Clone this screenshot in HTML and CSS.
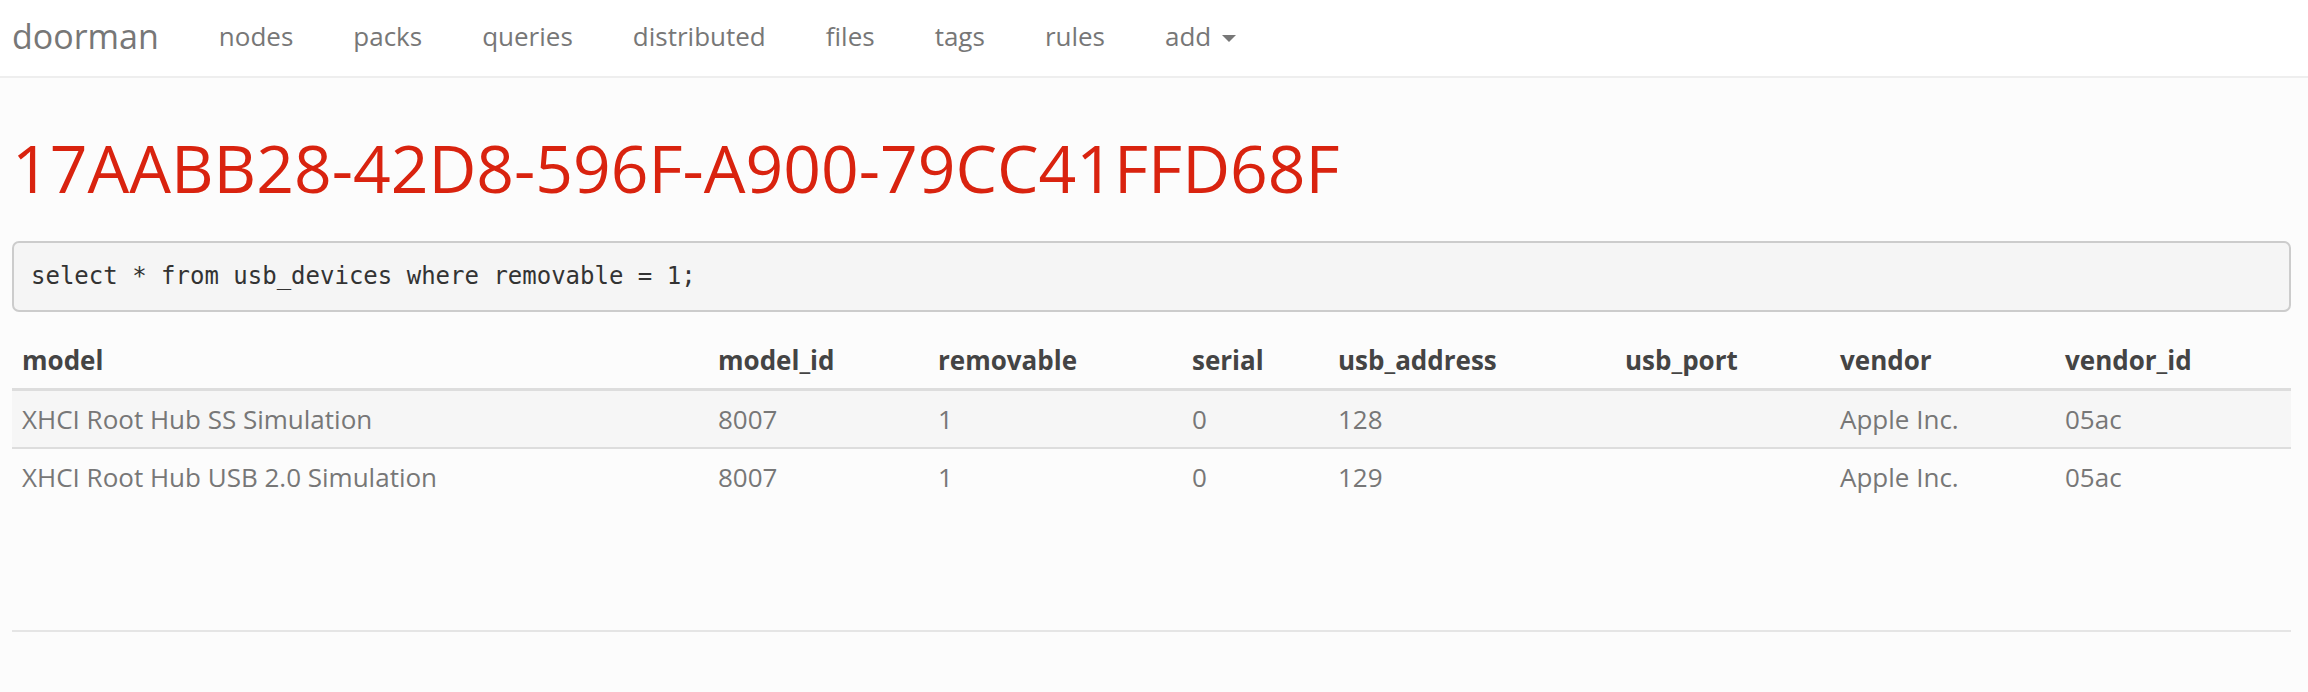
FILE: index.html
```html
<!DOCTYPE html>
<html>
<head>
<meta charset="utf-8">
<title>doorman</title>
<link rel="stylesheet" href="styles.css">
</head>
<body>
<nav class="navbar">
  <a class="brand" href="#">doorman</a>
  <ul class="nav">
    <li><a href="#">nodes</a></li>
    <li><a href="#">packs</a></li>
    <li><a href="#">queries</a></li>
    <li><a href="#">distributed</a></li>
    <li><a href="#">files</a></li>
    <li><a href="#">tags</a></li>
    <li><a href="#">rules</a></li>
    <li><a href="#">add <span class="caret"></span></a></li>
  </ul>
</nav>
<main class="container">
  <h1 class="title">17AABB28-42D8-596F-A900-79CC41FFD68F</h1>
  <pre class="query">select * from usb_devices where removable = 1;</pre>
  <table class="results">
    <colgroup>
      <col class="c-model"><col class="c-model-id"><col class="c-removable"><col class="c-serial"><col class="c-address"><col class="c-port"><col class="c-vendor"><col class="c-vendor-id">
    </colgroup>
    <thead>
      <tr><th>model</th><th>model_id</th><th>removable</th><th>serial</th><th>usb_address</th><th>usb_port</th><th>vendor</th><th>vendor_id</th></tr>
    </thead>
    <tbody>
      <tr><td>XHCI Root Hub SS Simulation</td><td>8007</td><td>1</td><td>0</td><td>128</td><td></td><td>Apple Inc.</td><td>05ac</td></tr>
      <tr><td>XHCI Root Hub USB 2.0 Simulation</td><td>8007</td><td>1</td><td>0</td><td>129</td><td></td><td>Apple Inc.</td><td>05ac</td></tr>
    </tbody>
  </table>
  <hr class="rule">
</main>
</body>
</html>
```

FILE: styles.css
```css
* { box-sizing: border-box; }
html, body { margin: 0; padding: 0; }
body {
  background: #fcfcfc;
  font-family: "Open Sans", "Liberation Sans", sans-serif;
  font-size: 26px;
  color: #777;
  height: 692px;
  overflow: hidden;
}
a { text-decoration: none; color: inherit; }

.navbar {
  height: 78px;
  background: #fff;
  border-bottom: 2px solid #eeeeee;
  display: flex;
  align-items: center;
  padding-left: 12px;
}
.brand {
  font-size: 34px;
  line-height: 40px;
  color: #777;
  margin-right: 30px;
  padding-bottom: 4px;
}
.nav {
  list-style: none;
  margin: 0;
  padding: 0;
  display: flex;
}
.nav a {
  display: block;
  padding: 0 30px 5px;
  font-size: 26px;
  line-height: 36px;
  color: #777;
}
.caret {
  display: inline-block;
  width: 0;
  height: 0;
  margin-left: 4px;
  vertical-align: middle;
  border-top: 7px solid #777;
  border-left: 7.5px solid transparent;
  border-right: 7.5px solid transparent;
}

.container {
  padding: 0 17px 0 12px;
}
.title {
  margin: 51px 0 36px;
  font-size: 66px;
  font-weight: 400;
  line-height: 76px;
  color: #d9230f;
}
.query {
  margin: 0 0 20px;
  padding: 16px 17px;
  background: #f5f5f5;
  border: 2px solid #cccccc;
  border-radius: 7px;
  font-family: "DejaVu Sans Mono", "Liberation Mono", monospace;
  font-size: 24px;
  line-height: 35px;
  color: #333;
}
.results {
  width: 100%;
  border-collapse: collapse;
  table-layout: fixed;
}
.c-model { width: 696px; }
.c-model-id { width: 220px; }
.c-removable { width: 254px; }
.c-serial { width: 146px; }
.c-address { width: 287px; }
.c-port { width: 215px; }
.c-vendor { width: 225px; }
.c-vendor-id { width: auto; }

.results th, .results td {
  text-align: left;
  padding: 10px 10px;
  line-height: 36px;
  white-space: nowrap;
}
.results th {
  font-weight: 700;
  color: #444;
  border-bottom: 3px solid #dddddd;
}
.results tbody tr + tr td {
  border-top: 2px solid #dddddd;
}
.results tbody tr:nth-child(odd) {
  background: #f6f6f6;
}
.rule {
  margin: 125px 0 0;
  border: 0;
  border-top: 2px solid #e5e5e5;
}
```
